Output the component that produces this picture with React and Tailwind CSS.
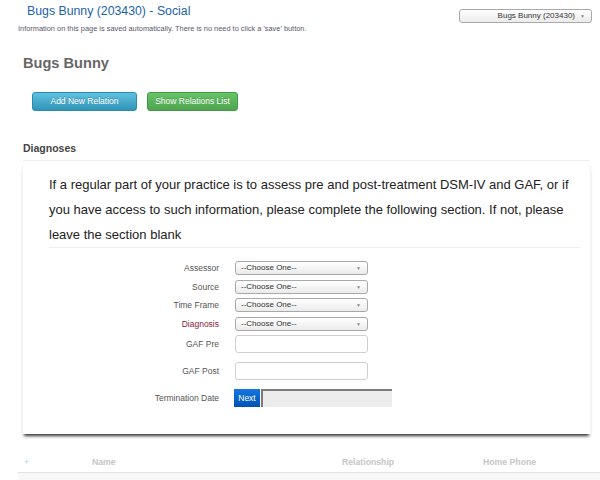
import React from "react";

const Select = ({ value, className = "" }) => (
  <div
    className={`relative flex h-[14px] w-[133px] items-center rounded-[3px] border border-[#a9a9a9] bg-gradient-to-b from-white to-[#ebebeb] text-[8px] text-[#333] ${className}`}
  >
    {value}
    <span className="absolute right-[6px] top-[3px] text-[5px] leading-[6px] text-[#8a8a8a]">▼</span>
  </div>
);

const formRows = [
  { label: "Assessor" },
  { label: "Source" },
  { label: "Time Frame" },
  { label: "Diagnosis", red: true },
];

const App = () => {
  return (
    <div className="h-[480px] w-[600px] overflow-hidden bg-white font-['Liberation_Sans',Arial,sans-serif]">
      {/* Top bar */}
      <div className="flex items-start justify-between">
        <div>
          <h1 className="pl-[27px] pt-[4px] text-[12.3px] leading-[14px] text-[#2262aa]">
            Bugs Bunny (203430) - Social
          </h1>
          <p className="mt-[7px] pl-[18px] text-[7.4px] leading-[8px] text-[#5a586a]">
            Information on this page is saved automatically. There is no need to click a 'save' button.
          </p>
        </div>
        <Select value="Bugs Bunny (203430)" className="mr-[8px] mt-[9px] justify-end pr-[16px]" />
      </div>

      {/* Client heading + actions */}
      <h2 className="mt-[22px] pl-[23px] text-[14.6px] font-bold leading-[16px] text-[#666]">Bugs Bunny</h2>
      <div className="mt-[21px] flex gap-[10px] pl-[32px]">
        <button className="h-[19px] w-[105px] rounded-[3px] border border-[#2a8bab] bg-gradient-to-b from-[#5fc2e2] to-[#2f94b6] text-[8.5px] text-white [text-shadow:0_-1px_0_rgba(0,0,0,0.2)]">
          Add New Relation
        </button>
        <button className="h-[19px] w-[91px] rounded-[3px] border border-[#449944] bg-gradient-to-b from-[#66c466] to-[#4fa44f] text-[8.5px] text-white [text-shadow:0_-1px_0_rgba(0,0,0,0.2)]">
          Show Relations List
        </button>
      </div>

      {/* Diagnoses */}
      <div className="ml-[23px] mt-[30.5px] w-[567px] border-b border-[#eeeeee] pb-[6px]">
        <h3 className="text-[10.5px] font-bold leading-[12px] text-[#444]">Diagnoses</h3>
      </div>

      <div className="ml-[22px] mt-[4.5px] w-[569px] border-x border-[#f3f3f3] pb-[27px] pl-[26px] pr-[10px] pt-[7px] shadow-[0_4px_3px_-2px_rgba(0,0,0,0.8)]">
        <p className="border-b border-[#eeeeee] text-[13px] leading-[25px] text-[#222]">
          If a regular part of your practice is to assess pre and post-treatment DSM-IV and GAF, or if you have
          access to such information, please complete the following section. If not, please leave the section
          blank
        </p>

        <div className="ml-[-26px] mt-[13px]">
          {formRows.map((r) => (
            <div key={r.label} className="flex h-[18.5px] items-start">
              <label
                className={`w-[196px] text-right text-[8.5px] leading-[14px] ${r.red ? "text-[#8c1a3c]" : "text-[#555]"}`}
              >
                {r.label}
              </label>
              <Select value="--Choose One--" className="ml-[16px] pl-[5px]" />
            </div>
          ))}
          {["GAF Pre", "GAF Post"].map((l) => (
            <div key={l} className="flex h-[27px] items-start">
              <label className="w-[196px] text-right text-[8.5px] leading-[18px] text-[#555]">{l}</label>
              <input className="ml-[16px] h-[18px] w-[133px] rounded-[3px] border border-[#cfcfcf] bg-white" />
            </div>
          ))}
          <div className="flex h-[18px] items-start">
            <label className="w-[196px] text-right text-[8.5px] leading-[18px] text-[#555]">Termination Date</label>
            <button className="ml-[15px] h-[18px] w-[26px] bg-gradient-to-b from-[#1477e0] to-[#0052b4] text-[8.5px] text-white">
              Next
            </button>
            <div className="ml-[1px] h-[18px] w-[131px] border-l-2 border-t-2 border-[#7a7a7a] bg-[#ececec]" />
          </div>
        </div>
      </div>

      {/* Relations table header */}
      <div className="ml-[18px] mt-[18px] grid h-[21px] grid-cols-[74px_250px_141px_1fr] items-center border-b border-[#e3e3e3] pt-[1px] text-[8.7px] font-bold text-[#c6c6c6]">
        <span className="pl-[6px] text-[9px] font-normal text-[#a9d1ea]">+</span>
        <span>Name</span>
        <span>Relationship</span>
        <span>Home Phone</span>
      </div>
      <div className="ml-[18px] h-[12px] bg-[#f7f7f7]" />
    </div>
  );
};

export default App;
